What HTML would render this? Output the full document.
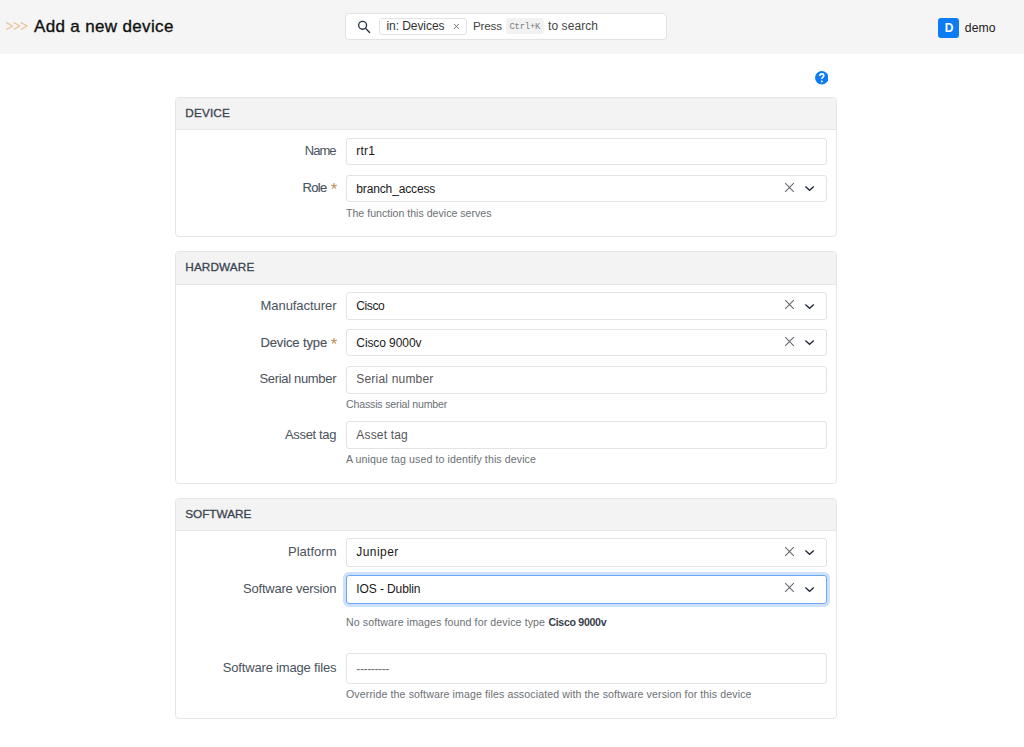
<!DOCTYPE html>
<html><head><meta charset="utf-8"><style>
html,body{margin:0;padding:0;width:1024px;height:747px;overflow:hidden;background:#fff;position:relative}
body{font-family:"Liberation Sans", sans-serif}
.t{position:absolute;line-height:1;white-space:nowrap}
.box{position:absolute;box-sizing:content-box}
svg{display:block}
</style></head><body>
<div class="box" style="left:0;top:0;width:1024px;height:54px;background:#f5f5f5"></div>
<svg style="position:absolute;left:0;top:0" width="40" height="54"><path d="M6.8 22.7L12.6 26L6.8 29.3M14.1 22.7L19.9 26L14.1 29.3M21.3 22.7L27.1 26L21.3 29.3" fill="none" stroke="#eac196" stroke-width="1.3" stroke-linecap="round" stroke-linejoin="round"/></svg>
<div class="t" style="top:17.61px;font-size:17px;color:#111;font-weight:normal;font-family:'Liberation Sans', sans-serif;letter-spacing:0.346px;left:34.00px;-webkit-text-stroke:0.35px #111;">Add a new device</div>
<div class="box" style="left:345px;top:12.5px;width:320px;height:25px;border-radius:4px;border:1px solid #e2e2e2;background:#fff"></div>
<svg style="position:absolute;left:354px;top:17px" width="20" height="20" viewBox="0 0 20 20"><circle cx="8.6" cy="8.3" r="3.95" fill="none" stroke="#283547" stroke-width="1.35"/><line x1="11.5" y1="11.3" x2="15.6" y2="15.4" stroke="#283547" stroke-width="1.4" stroke-linecap="round"/></svg>
<div class="box" style="left:379px;top:17.5px;width:86px;height:15px;border-radius:3px;border:1px solid #e2e2e2;background:#fff"></div>
<div class="t" style="top:19.84px;font-size:12px;color:#333;font-weight:normal;font-family:'Liberation Sans', sans-serif;letter-spacing:-0.068px;left:386.50px;">in: Devices</div>
<svg style="position:absolute;left:452.5px;top:22.5px" width="7" height="7" viewBox="0 0 7 7"><path d="M0.9 0.9L5.9 5.9M5.9 0.9L0.9 5.9" stroke="#6a6f76" stroke-width="0.95"/></svg>
<div class="t" style="top:20.10px;font-size:11.7px;color:#444;font-weight:normal;font-family:'Liberation Sans', sans-serif;letter-spacing:-0.223px;left:473.00px;">Press</div>
<div class="box" style="left:505.5px;top:17.5px;width:38px;height:16.5px;border-radius:3px;background:#f2f2f2"></div>
<div class="t" style="top:22.55px;font-size:8.8px;color:#7a7d80;font-weight:normal;font-family:'Liberation Mono', monospace;letter-spacing:-0.136px;left:509.40px;">Ctrl+K</div>
<div class="t" style="top:19.84px;font-size:12px;color:#444;font-weight:normal;font-family:'Liberation Sans', sans-serif;letter-spacing:0.078px;left:548.00px;">to search</div>
<div class="box" style="left:938px;top:17.5px;width:20.5px;height:20.5px;border-radius:3px;background:#0d7cf2"></div>
<div class="t" style="top:22.44px;font-size:12px;color:#fff;font-weight:bold;font-family:'Liberation Sans', sans-serif;left:944.80px;transform:scaleY(1.03);">D</div>
<div class="t" style="top:22.37px;font-size:12.2px;color:#1a1a1a;font-weight:normal;font-family:'Liberation Sans', sans-serif;letter-spacing:0.067px;left:964.80px;">demo</div>
<svg style="position:absolute;left:814.5px;top:71px" width="13.5" height="13.5" viewBox="0 0 16 16"><circle cx="8" cy="8" r="8" fill="#0d7cf2"/><path d="M5.7 5.9C5.7 4.2 6.8 3.4 8.1 3.4C9.5 3.4 10.4 4.3 10.4 5.5C10.4 6.8 9.4 7.2 8.8 7.7C8.3 8.1 8.1 8.5 8.1 9.5" fill="none" stroke="#fff" stroke-width="1.9"/><circle cx="8.1" cy="12.3" r="1.15" fill="#fff"/></svg>
<div class="box" style="left:175px;top:97px;width:660px;height:138px;border:1px solid #e6e6e6;border-radius:4px;background:#fff;overflow:hidden"><div style="position:absolute;left:0;top:0;right:0;height:31px;background:#f3f3f3;border-bottom:1px solid #e6e6e6"></div></div>
<div class="t" style="top:108.01px;font-size:11.8px;color:#3a4450;font-weight:normal;font-family:'Liberation Sans', sans-serif;letter-spacing:0.129px;left:185.30px;-webkit-text-stroke:0.3px #3a4450;">DEVICE</div>
<div class="t" style="top:144.00px;font-size:13px;color:#4a525c;font-weight:normal;font-family:'Liberation Sans', sans-serif;letter-spacing:-1.003px;left:304.80px;">Name</div>
<div class="box" style="left:346px;top:138px;width:479px;height:25px;border-radius:3px;border:1px solid #e3e3e3;background:#fff"></div>
<div class="t" style="top:145.04px;font-size:12px;color:#1a1a1a;font-weight:normal;font-family:'Liberation Sans', sans-serif;letter-spacing:0.233px;left:356.30px;">rtr1</div>
<div class="t" style="top:181.30px;font-size:13px;color:#4a525c;font-weight:normal;font-family:'Liberation Sans', sans-serif;letter-spacing:-0.638px;left:302.40px;-webkit-text-stroke:0.15px #4a525c;">Role</div>
<svg style="position:absolute;left:330.5px;top:183.40px" width="6" height="6" viewBox="0 0 6 6"><path d="M3 3L3 0.5M3 3L5.4 2.2M3 3L4.5 5.1M3 3L1.5 5.1M3 3L0.6 2.2" stroke="#bf935f" stroke-width="1.2" stroke-linecap="round"/></svg>
<div class="box" style="left:346px;top:175px;width:479px;height:25px;border-radius:3px;border:1px solid #e3e3e3;background:#fff"></div>
<div class="t" style="top:182.54px;font-size:12px;color:#1a1a1a;font-weight:normal;font-family:'Liberation Sans', sans-serif;letter-spacing:-0.142px;left:356.30px;">branch_access</div>
<svg style="position:absolute;left:784px;top:181.70px" width="11" height="11" viewBox="0 0 11 11"><path d="M1.2 1.2L9.8 9.8M9.8 1.2L1.2 9.8" stroke="#62666d" stroke-width="1.05"/></svg>
<svg style="position:absolute;left:804px;top:185.00px" width="11" height="7" viewBox="0 0 11 7"><path d="M1.4 1.5L5.6 5.3L9.8 1.5" fill="none" stroke="#1d2433" stroke-width="1.25"/></svg>
<div class="t" style="top:207.93px;font-size:10.6px;color:#6b7075;font-weight:normal;font-family:'Liberation Sans', sans-serif;letter-spacing:0.002px;left:346.00px;">The function this device serves</div>
<div class="box" style="left:175px;top:251px;width:660px;height:231px;border:1px solid #e6e6e6;border-radius:4px;background:#fff;overflow:hidden"><div style="position:absolute;left:0;top:0;right:0;height:32px;background:#f3f3f3;border-bottom:1px solid #e6e6e6"></div></div>
<div class="t" style="top:262.01px;font-size:11.8px;color:#3a4450;font-weight:normal;font-family:'Liberation Sans', sans-serif;letter-spacing:0.088px;left:185.30px;-webkit-text-stroke:0.3px #3a4450;">HARDWARE</div>
<div class="t" style="top:299.30px;font-size:13px;color:#4a525c;font-weight:normal;font-family:'Liberation Sans', sans-serif;letter-spacing:-0.052px;left:260.50px;">Manufacturer</div>
<div class="box" style="left:346px;top:292px;width:479px;height:26px;border-radius:3px;border:1px solid #e3e3e3;background:#fff"></div>
<div class="t" style="top:300.34px;font-size:12px;color:#1a1a1a;font-weight:normal;font-family:'Liberation Sans', sans-serif;letter-spacing:-0.400px;left:356.30px;">Cisco</div>
<svg style="position:absolute;left:784px;top:299.20px" width="11" height="11" viewBox="0 0 11 11"><path d="M1.2 1.2L9.8 9.8M9.8 1.2L1.2 9.8" stroke="#62666d" stroke-width="1.05"/></svg>
<svg style="position:absolute;left:804px;top:302.50px" width="11" height="7" viewBox="0 0 11 7"><path d="M1.4 1.5L5.6 5.3L9.8 1.5" fill="none" stroke="#1d2433" stroke-width="1.25"/></svg>
<div class="t" style="top:336.10px;font-size:13px;color:#4a525c;font-weight:normal;font-family:'Liberation Sans', sans-serif;letter-spacing:-0.113px;left:260.40px;-webkit-text-stroke:0.15px #4a525c;">Device type</div>
<svg style="position:absolute;left:330.5px;top:338.20px" width="6" height="6" viewBox="0 0 6 6"><path d="M3 3L3 0.5M3 3L5.4 2.2M3 3L4.5 5.1M3 3L1.5 5.1M3 3L0.6 2.2" stroke="#bf935f" stroke-width="1.2" stroke-linecap="round"/></svg>
<div class="box" style="left:346px;top:329px;width:479px;height:25px;border-radius:3px;border:1px solid #e3e3e3;background:#fff"></div>
<div class="t" style="top:337.14px;font-size:12px;color:#1a1a1a;font-weight:normal;font-family:'Liberation Sans', sans-serif;letter-spacing:-0.086px;left:356.30px;">Cisco 9000v</div>
<svg style="position:absolute;left:784px;top:335.70px" width="11" height="11" viewBox="0 0 11 11"><path d="M1.2 1.2L9.8 9.8M9.8 1.2L1.2 9.8" stroke="#62666d" stroke-width="1.05"/></svg>
<svg style="position:absolute;left:804px;top:339.00px" width="11" height="7" viewBox="0 0 11 7"><path d="M1.4 1.5L5.6 5.3L9.8 1.5" fill="none" stroke="#1d2433" stroke-width="1.25"/></svg>
<div class="t" style="top:372.40px;font-size:13px;color:#4a525c;font-weight:normal;font-family:'Liberation Sans', sans-serif;letter-spacing:-0.327px;left:259.50px;">Serial number</div>
<div class="box" style="left:346px;top:366px;width:479px;height:26px;border-radius:3px;border:1px solid #e3e3e3;background:#fff"></div>
<div class="t" style="top:373.44px;font-size:12px;color:#555;font-weight:normal;font-family:'Liberation Sans', sans-serif;letter-spacing:0.192px;left:356.30px;">Serial number</div>
<div class="t" style="top:398.73px;font-size:10.6px;color:#6b7075;font-weight:normal;font-family:'Liberation Sans', sans-serif;letter-spacing:-0.174px;left:346.00px;">Chassis serial number</div>
<div class="t" style="top:427.70px;font-size:13px;color:#4a525c;font-weight:normal;font-family:'Liberation Sans', sans-serif;letter-spacing:-0.339px;left:285.00px;">Asset tag</div>
<div class="box" style="left:346px;top:421px;width:479px;height:26px;border-radius:3px;border:1px solid #e3e3e3;background:#fff"></div>
<div class="t" style="top:428.74px;font-size:12px;color:#555;font-weight:normal;font-family:'Liberation Sans', sans-serif;letter-spacing:0.183px;left:356.30px;">Asset tag</div>
<div class="t" style="top:454.03px;font-size:10.6px;color:#6b7075;font-weight:normal;font-family:'Liberation Sans', sans-serif;letter-spacing:0.094px;left:346.00px;">A unique tag used to identify this device</div>
<div class="box" style="left:175px;top:498px;width:660px;height:219px;border:1px solid #e6e6e6;border-radius:4px;background:#fff;overflow:hidden"><div style="position:absolute;left:0;top:0;right:0;height:31px;background:#f3f3f3;border-bottom:1px solid #e6e6e6"></div></div>
<div class="t" style="top:509.01px;font-size:11.8px;color:#3a4450;font-weight:normal;font-family:'Liberation Sans', sans-serif;letter-spacing:-0.062px;left:185.30px;-webkit-text-stroke:0.3px #3a4450;">SOFTWARE</div>
<div class="t" style="top:544.80px;font-size:13px;color:#4a525c;font-weight:normal;font-family:'Liberation Sans', sans-serif;letter-spacing:0.011px;left:288.00px;">Platform</div>
<div class="box" style="left:346px;top:538px;width:479px;height:27px;border-radius:3px;border:1px solid #e3e3e3;background:#fff"></div>
<div class="t" style="top:545.84px;font-size:12px;color:#1a1a1a;font-weight:normal;font-family:'Liberation Sans', sans-serif;letter-spacing:0.440px;left:356.30px;">Juniper</div>
<svg style="position:absolute;left:784px;top:545.70px" width="11" height="11" viewBox="0 0 11 11"><path d="M1.2 1.2L9.8 9.8M9.8 1.2L1.2 9.8" stroke="#62666d" stroke-width="1.05"/></svg>
<svg style="position:absolute;left:804px;top:549.00px" width="11" height="7" viewBox="0 0 11 7"><path d="M1.4 1.5L5.6 5.3L9.8 1.5" fill="none" stroke="#1d2433" stroke-width="1.25"/></svg>
<div class="t" style="top:582.40px;font-size:13px;color:#4a525c;font-weight:normal;font-family:'Liberation Sans', sans-serif;letter-spacing:-0.230px;left:243.10px;">Software version</div>
<div class="box" style="left:342.6px;top:571.8px;width:487.6px;height:35.1px;border-radius:6px;background:#cde1fd"></div>
<div class="box" style="left:346px;top:575px;width:479px;height:26.5px;border-radius:3px;border:1px solid #6ba6fa;background:#fff"></div>
<div class="t" style="top:583.44px;font-size:12px;color:#1a1a1a;font-weight:normal;font-family:'Liberation Sans', sans-serif;letter-spacing:-0.104px;left:356.30px;">IOS - Dublin</div>
<svg style="position:absolute;left:784px;top:582.45px" width="11" height="11" viewBox="0 0 11 11"><path d="M1.2 1.2L9.8 9.8M9.8 1.2L1.2 9.8" stroke="#62666d" stroke-width="1.05"/></svg>
<svg style="position:absolute;left:804px;top:585.75px" width="11" height="7" viewBox="0 0 11 7"><path d="M1.4 1.5L5.6 5.3L9.8 1.5" fill="none" stroke="#1d2433" stroke-width="1.25"/></svg>
<div class="t" style="top:617.03px;font-size:10.6px;color:#6b7075;font-weight:normal;font-family:'Liberation Sans', sans-serif;letter-spacing:0.104px;left:346.00px;">No software images found for device type</div>
<div class="t" style="top:617.03px;font-size:10.6px;color:#37404a;font-weight:bold;font-family:'Liberation Sans', sans-serif;letter-spacing:-0.307px;left:548.40px;">Cisco 9000v</div>
<div class="t" style="top:660.60px;font-size:13px;color:#4a525c;font-weight:normal;font-family:'Liberation Sans', sans-serif;letter-spacing:-0.177px;left:222.80px;">Software image files</div>
<div class="box" style="left:346px;top:653px;width:479px;height:29px;border-radius:3px;border:1px solid #e3e3e3;background:#fff"></div>
<div class="t" style="top:663.24px;font-size:12px;color:#6c737a;font-weight:normal;font-family:'Liberation Sans', sans-serif;letter-spacing:-0.367px;left:356.30px;">---------</div>
<div class="t" style="top:689.33px;font-size:10.6px;color:#6b7075;font-weight:normal;font-family:'Liberation Sans', sans-serif;letter-spacing:0.108px;left:346.00px;">Override the software image files associated with the software version for this device</div>
</body></html>
